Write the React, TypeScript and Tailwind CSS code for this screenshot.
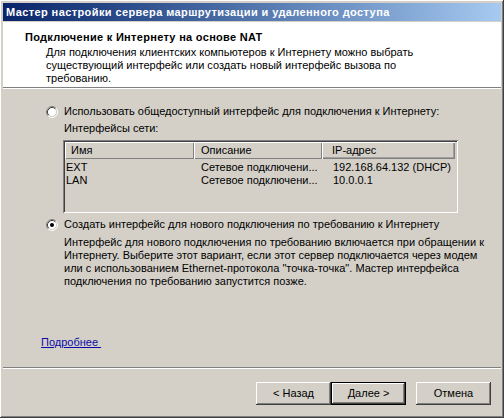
import React from 'react';

const raised =
  'shadow-[inset_-1px_-1px_#404040,inset_1px_1px_#ffffff,inset_-2px_-2px_#808080,inset_2px_2px_#d4d0c8]';

function Radio({ checked }: { checked: boolean }) {
  return (
    <svg width="12" height="12" viewBox="0 0 12 12" className="shrink-0">
      <circle cx="6" cy="6" r="4.5" fill="#ffffff" />
      <path d="M2.11 9.89 A5.5 5.5 0 0 1 9.89 2.11" fill="none" stroke="#808080" strokeWidth="1" />
      <path d="M9.89 2.11 A5.5 5.5 0 0 1 2.11 9.89" fill="none" stroke="#ffffff" strokeWidth="1" />
      <path d="M2.82 9.18 A4.5 4.5 0 0 1 9.18 2.82" fill="none" stroke="#404040" strokeWidth="1" />
      <path d="M9.18 2.82 A4.5 4.5 0 0 1 2.82 9.18" fill="none" stroke="#d4d0c8" strokeWidth="1" />
      {checked && <circle cx="6" cy="6" r="2" fill="#000000" />}
    </svg>
  );
}

function Button({ label, isDefault }: { label: string; isDefault?: boolean }) {
  if (isDefault) {
    return (
      <div className="h-[23px] w-[75px] border border-black">
        <div className={`flex h-full w-full items-center justify-center ${raised}`}>{label}</div>
      </div>
    );
  }
  return <div className={`flex h-[23px] w-[75px] items-center justify-center ${raised}`}>{label}</div>;
}

const interfaces = [
  { name: 'EXT', description: 'Сетевое подключени...', ip: '192.168.64.132 (DHCP)' },
  { name: 'LAN', description: 'Сетевое подключени...', ip: '10.0.0.1' },
];

const headerLines = [
  'Для подключения клиентских компьютеров к Интернету можно выбрать',
  'существующий интерфейс или создать новый интерфейс вызова по',
  'требованию.',
];

const demandLines = [
  'Интерфейс для нового подключения по требованию включается при обращении к',
  'Интернету. Выберите этот вариант, если этот сервер подключается через модем',
  'или с использованием Ethernet-протокола "точка-точка". Мастер интерфейса',
  'подключения по требованию запустится позже.',
];

export default function App() {
  return (
    <div
      className={`flex h-[418px] w-[504px] flex-col bg-[#d4d0c8] p-[3px] text-[11px] leading-[13px] text-black font-['Liberation_Sans',Arial,sans-serif] ${raised}`}
    >
      {/* title bar */}
      <div className="flex h-[18px] shrink-0 items-center bg-gradient-to-r from-[#0a246a] to-[#a6caf0] pl-[3px] font-bold tracking-[0.4px] text-white">
        Мастер настройки сервера маршрутизации и удаленного доступа
      </div>
      <div className="h-px shrink-0" />

      {/* header */}
      <div className="h-[65px] shrink-0 bg-white pl-[22px] pt-[9px]">
        <div className="font-bold tracking-[0.3px]">Подключение к Интернету на основе NAT</div>
        <div className="mt-[2px] whitespace-nowrap pl-[21px]">
          {headerLines.map(line => (
            <div key={line}>{line}</div>
          ))}
        </div>
      </div>
      <div className="h-px shrink-0 bg-[#808080]" />
      <div className="h-px shrink-0 bg-white" />

      {/* body */}
      <div className="flex flex-1 flex-col pl-[43px] pt-[16px]">
        <div className="flex h-[13px] items-center gap-[6px]">
          <Radio checked={false} />
          <span>Использовать общедоступный интерфейс для подключения к Интернету:</span>
        </div>
        <div className="ml-[18px] mt-[4px]">Интерфейсы сети:</div>

        <div className="ml-[17px] mt-[5px] h-[73px] w-[395px] p-[2px] shadow-[inset_1px_1px_#808080,inset_-1px_-1px_#ffffff,inset_2px_2px_#404040,inset_-2px_-2px_#d4d0c8]">
          <div className="flex h-[17px]">
            <div className="flex w-[129px] items-center pl-[6px] shadow-[inset_1px_1px_#ffffff,inset_-1px_-1px_#808080]">
              Имя
            </div>
            <div className="flex w-[128px] items-center pl-[7px] shadow-[inset_1px_1px_#ffffff,inset_-1px_-1px_#808080]">
              Описание
            </div>
            <div className="flex w-[133px] items-center pl-[10px] shadow-[inset_1px_1px_#ffffff,inset_-1px_-1px_#808080,inset_-2px_-2px_#a0a0a0]">
              IP-адрес
            </div>
          </div>
          <div className="pl-px pt-[2px]">
            {interfaces.map(item => (
              <div key={item.name} className="grid h-[13px] grid-cols-[135px_132px_1fr] items-center whitespace-nowrap">
                <span>{item.name}</span>
                <span>{item.description}</span>
                <span>{item.ip}</span>
              </div>
            ))}
          </div>
        </div>

        <div className="mt-[5px] flex h-[13px] items-center gap-[6px]">
          <Radio checked />
          <span>Создать интерфейс для нового подключения по требованию к Интернету</span>
        </div>
        <div className="ml-[18px] mt-[5px] whitespace-nowrap">
          {demandLines.map(line => (
            <div key={line}>{line}</div>
          ))}
        </div>

        <div className="-ml-[5px] mt-[48px]">
          <span className="text-[#0b0ba8] underline">Подробнее&nbsp;</span>
        </div>
      </div>

      {/* footer */}
      <div className="h-px shrink-0 bg-[#808080]" />
      <div className="h-px shrink-0 bg-white" />
      <div className="flex h-[46px] shrink-0 justify-end pr-[10px] pt-[13px]">
        <Button label="< Назад" />
        <Button label="Далее >" isDefault />
        <div className="w-[10px]" />
        <Button label="Отмена" />
      </div>
    </div>
  );
}
